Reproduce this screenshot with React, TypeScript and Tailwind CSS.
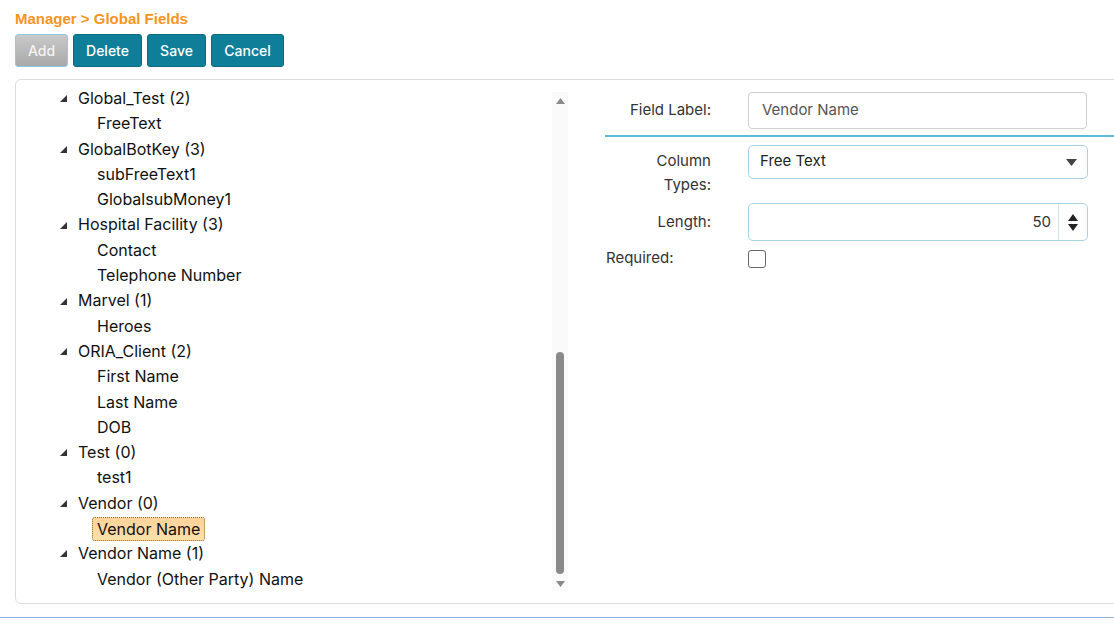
import React from "react";

type Group = { label: string; children: string[] };

const groups: Group[] = [
  { label: "Global_Test (2)", children: ["FreeText"] },
  { label: "GlobalBotKey (3)", children: ["subFreeText1", "GlobalsubMoney1"] },
  { label: "Hospital Facility (3)", children: ["Contact", "Telephone Number"] },
  { label: "Marvel (1)", children: ["Heroes"] },
  { label: "ORIA_Client (2)", children: ["First Name", "Last Name", "DOB"] },
  { label: "Test (0)", children: ["test1"] },
  { label: "Vendor (0)", children: ["Vendor Name"] },
  { label: "Vendor Name (1)", children: ["Vendor (Other Party) Name"] },
];

const selected = "Vendor (0)/Vendor Name";

function Expander() {
  return (
    <svg width="7" height="7" viewBox="0 0 7 7" className="shrink-0">
      <polygon points="7,0 7,7 0,7" fill="#333" />
    </svg>
  );
}

function Tree() {
  return (
    <div className="w-[536px] shrink-0 pt-[6px] pl-[44px] text-[16px] leading-[25.3px] text-[#111]">
      {groups.map((g) => (
        <div key={g.label}>
          <div className="flex h-[25.3px] items-center gap-[11px]">
            <Expander />
            <span>{g.label}</span>
          </div>
          {g.children.map((c) => {
            const isSel = `${g.label}/${c}` === selected;
            return (
              <div key={c} className="flex h-[25.3px] items-center pl-[37px]">
                <span
                  className={
                    isSel
                      ? "-ml-[5px] rounded-[3px] border border-dotted border-[#8a6a30] bg-gradient-to-b from-[#ffd29a] to-[#ffe0a8] px-[4px] leading-[22px]"
                      : ""
                  }
                >
                  {c}
                </span>
              </div>
            );
          })}
        </div>
      ))}
    </div>
  );
}

function Scrollbar() {
  return (
    <div className="mt-[12px] mb-[12px] flex w-[16px] shrink-0 flex-col items-center bg-[#fafafa]">
      <svg width="9" height="6" viewBox="0 0 9 6" className="mt-[6px]">
        <polygon points="4.5,0 9,6 0,6" fill="#8a8a8a" />
      </svg>
      <div className="flex-1" />
      <div className="h-[222px] w-[8px] rounded-[4px] bg-[#8a8a8a]" />
      <svg width="9" height="6" viewBox="0 0 9 6" className="mt-[7px] mb-[4px]">
        <polygon points="0,0 9,0 4.5,6" fill="#8a8a8a" />
      </svg>
    </div>
  );
}

function Form() {
  return (
    <div className="ml-[37px] flex-1 pt-[12px] text-[15px] text-[#333]">
      <div className="flex items-center">
        <div className="w-[106px] text-right">Field Label:</div>
        <div className="ml-[37px] flex h-[37px] w-[339px] items-center rounded-[4px] border border-[#cfcfcf] px-[13px] text-[#555]">
          Vendor Name
        </div>
      </div>
      <div className="mt-[6px] h-[2px] w-full bg-[#5bbcd9]" />
      <div className="mt-[8px] flex items-start">
        <div className="w-[106px] pt-[4px] text-right leading-[24px]">
          Column
          <br />
          Types:
        </div>
        <div className="ml-[37px] flex h-[34px] w-[340px] items-center justify-between rounded-[5px] border border-[#a9d2e6] pl-[11px] pr-[10px] text-[#222]">
          <span className="-mt-[2px]">Free Text</span>
          <svg width="11" height="7" viewBox="0 0 11 7">
            <polygon points="0,0 11,0 5.5,7" fill="#444" />
          </svg>
        </div>
      </div>
      <div className="mt-[6px] flex items-center">
        <div className="w-[106px] text-right">Length:</div>
        <div className="ml-[37px] flex h-[38px] w-[340px] items-stretch rounded-[5px] border border-[#a9d2e6]">
          <div className="flex flex-1 items-center justify-end pr-[7px] text-[#333]">50</div>
          <div className="flex w-[29px] flex-col items-center justify-center gap-[3px] border-l border-[#d4e6ef]">
            <svg width="10" height="7" viewBox="0 0 10 7">
              <polygon points="5,0 10,7 0,7" fill="#222" />
            </svg>
            <svg width="10" height="7" viewBox="0 0 10 7">
              <polygon points="0,0 10,0 5,7" fill="#222" />
            </svg>
          </div>
        </div>
      </div>
      <div className="mt-[6px] flex items-center">
        <div className="ml-[1px] w-[142px] pb-[2px]">Required:</div>
        <div className="h-[18px] w-[18px] rounded-[3px] border border-[#666] bg-white" />
      </div>
    </div>
  );
}

export default function App() {
  return (
    <div
      className="relative h-[631px] w-full overflow-hidden bg-white"
      style={{ fontFamily: "Inter, 'Noto Sans', sans-serif" }}
    >
      <div className="border-b border-[#8fb2de] pb-[13px]">
        <div
          className="pl-[15px] pt-[10px] text-[15px] font-bold leading-[17px] text-[#f7941d]"
          style={{ fontFamily: "'Liberation Sans', Arial, sans-serif" }}
        >
          Manager &gt; Global Fields
        </div>
        <div className="mt-[7px] flex gap-[5px] pl-[15px] text-[14px] font-medium text-white">
          <button className="h-[33px] w-[53px] rounded-[3px] border border-[#8ccbe0] bg-gradient-to-b from-[#c9c9c9] to-[#a9a9a9] text-[#f4f4f4]">
            Add
          </button>
          <button className="h-[33px] w-[69px] rounded-[3px] border border-[#0a6a80] bg-[#0f7f99]">
            Delete
          </button>
          <button className="h-[33px] w-[59px] rounded-[3px] border border-[#0a6a80] bg-[#0f7f99]">
            Save
          </button>
          <button className="h-[33px] w-[73px] rounded-[3px] border border-[#0a6a80] bg-[#0f7f99]">
            Cancel
          </button>
        </div>
        <div className="mt-[12px] ml-[15px] mr-[-10px] flex h-[525px] rounded-[6px] border border-[#dcdcdc]">
          <Tree />
          <Scrollbar />
          <Form />
        </div>
      </div>
    </div>
  );
}
